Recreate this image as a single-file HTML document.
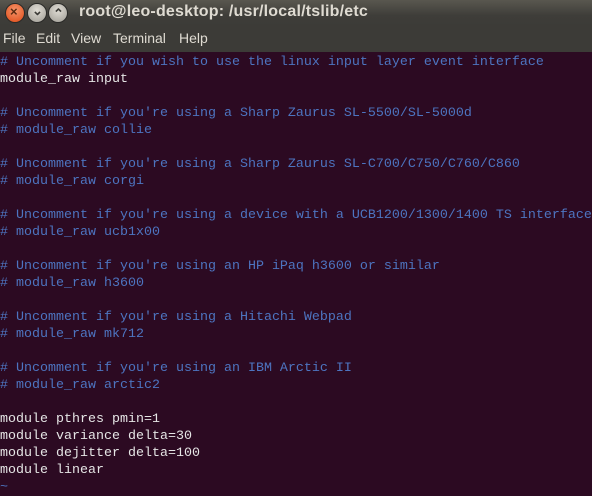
<!DOCTYPE html>
<html><head><meta charset="utf-8"><style>
html,body{margin:0;padding:0;width:592px;height:489px;overflow:hidden;background:#2c0a22}
.title{position:absolute;left:0;top:0;width:592px;height:26px;background:linear-gradient(#59574f,#3e3d39 60%,#3c3b37)}
.menu{position:absolute;left:0;top:26px;width:592px;height:26px;background:#3c3b37;color:#dfdbd2;font:14px "Liberation Sans",sans-serif}
.menu span{position:absolute;top:4px}
.t{position:absolute;left:79px;top:3px;color:#dfdbd2;font:bold 16px "Liberation Sans",sans-serif;letter-spacing:0.2px}
.btn{position:absolute;top:3px;width:18px;height:18px;border-radius:50%;}
pre{position:absolute;left:0;top:54px;margin:0;font:13.33px/17px "Liberation Mono",monospace;color:#e5e5e5;white-space:pre}
.c{color:#4d74c0}
</style></head><body>
<div class="title">
<div class="btn" style="left:5px;background:radial-gradient(circle at 50% 35%,#f5946a,#df4a16);border:1px solid #2a2a28"></div>
<div class="btn" style="left:27px;background:radial-gradient(circle at 50% 35%,#e0ddd5,#9e9b93);border:1px solid #2a2a28"></div>
<div class="btn" style="left:48px;background:radial-gradient(circle at 50% 35%,#e0ddd5,#9e9b93);border:1px solid #2a2a28"></div>
<span style="position:absolute;left:10px;top:4px;color:#5a2a10;font:bold 13px 'Liberation Sans'">×</span>
<span style="position:absolute;left:32px;top:3px;color:#3c3b37;font:bold 13px 'Liberation Sans'">⌄</span>
<span style="position:absolute;left:53px;top:6px;color:#3c3b37;font:bold 13px 'Liberation Sans'">⌃</span>
<div class="t">root@leo-desktop: /usr/local/tslib/etc</div>
</div>
<div class="menu"><span style="left:3px">File</span><span style="left:36px">Edit</span><span style="left:71px">View</span><span style="left:113px">Terminal</span><span style="left:179px">Help</span></div>
<pre><span class="c"># Uncomment if you wish to use the linux input layer event interface</span>
module_raw input

<span class="c"># Uncomment if you're using a Sharp Zaurus SL-5500/SL-5000d</span>
<span class="c"># module_raw collie</span>

<span class="c"># Uncomment if you're using a Sharp Zaurus SL-C700/C750/C760/C860</span>
<span class="c"># module_raw corgi</span>

<span class="c"># Uncomment if you're using a device with a UCB1200/1300/1400 TS interface</span>
<span class="c"># module_raw ucb1x00</span>

<span class="c"># Uncomment if you're using an HP iPaq h3600 or similar</span>
<span class="c"># module_raw h3600</span>

<span class="c"># Uncomment if you're using a Hitachi Webpad</span>
<span class="c"># module_raw mk712</span>

<span class="c"># Uncomment if you're using an IBM Arctic II</span>
<span class="c"># module_raw arctic2</span>

module pthres pmin=1
module variance delta=30
module dejitter delta=100
module linear
<span class="c">~</span></pre>
</body></html>
